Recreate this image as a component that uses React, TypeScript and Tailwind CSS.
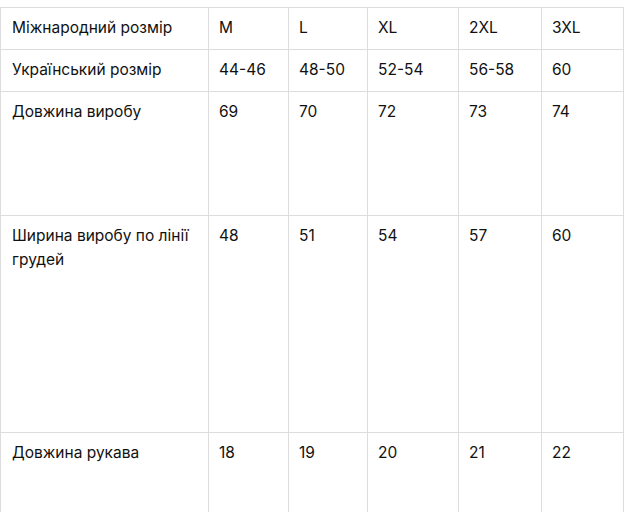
import React from "react";

const rows: { label: string; values: string[]; h: string }[] = [
  { label: "Міжнародний розмір", values: ["M", "L", "XL", "2XL", "3XL"], h: "h-[42px]" },
  { label: "Український розмір", values: ["44-46", "48-50", "52-54", "56-58", "60"], h: "h-[42px]" },
  { label: "Довжина виробу", values: ["69", "70", "72", "73", "74"], h: "h-[124px]" },
  { label: "Ширина виробу по лінії грудей", values: ["48", "51", "54", "57", "60"], h: "h-[217px]" },
  { label: "Довжина рукава", values: ["18", "19", "20", "21", "22"], h: "h-[124px]" },
];

export default function App() {
  return (
    <div className="w-[625px] h-[512px] overflow-hidden bg-white">
      <table
        className="mt-[7px] table-fixed border-collapse w-[623px] text-[15.5px] leading-[24px] text-[#111111]"
        style={{ fontFamily: "Inter, 'Noto Sans', sans-serif" }}
      >
        <colgroup>
          <col className="w-[208px]" />
          <col className="w-[80px]" />
          <col className="w-[79px]" />
          <col className="w-[91px]" />
          <col className="w-[83px]" />
          <col className="w-[82px]" />
        </colgroup>
        <tbody>
          {rows.map((r) => (
            <tr key={r.label} className={r.h}>
              <td className="border border-[#dddddd] align-top pt-[8px] pl-[11px] pr-[10px]">{r.label}</td>
              {r.values.map((v, i) => (
                <td key={i} className="border border-[#dddddd] align-top pt-[8px] pl-[10px]">
                  {v}
                </td>
              ))}
            </tr>
          ))}
        </tbody>
      </table>
    </div>
  );
}
